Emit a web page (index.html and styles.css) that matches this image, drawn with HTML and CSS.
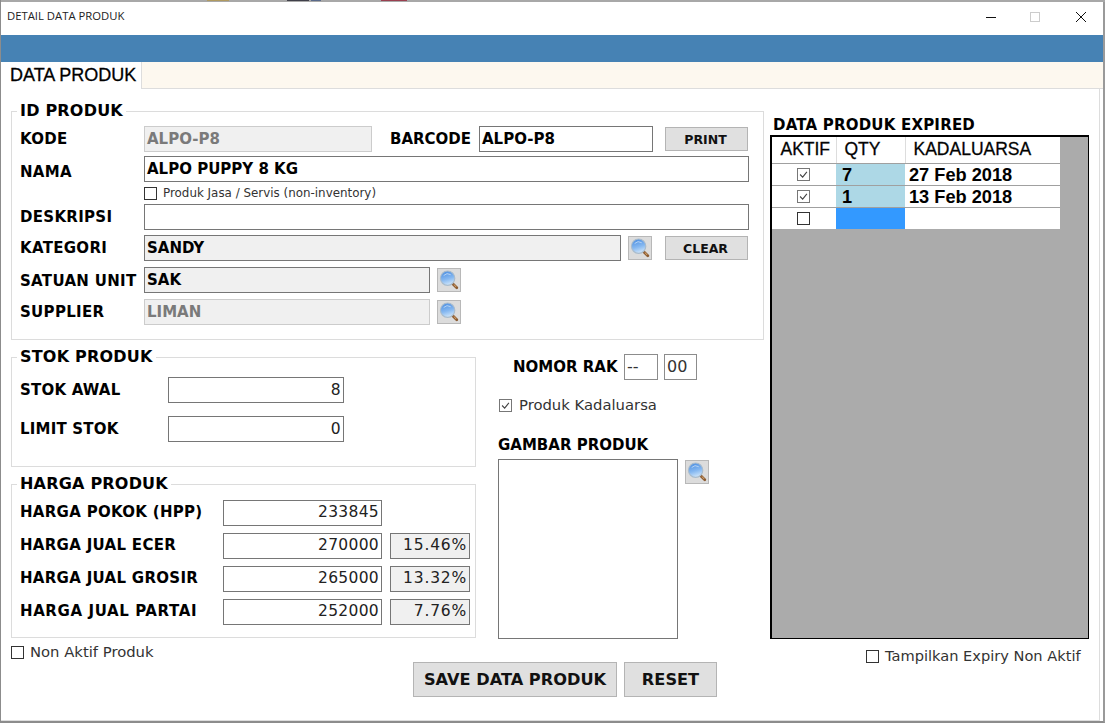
FILE: index.html
```html
<!DOCTYPE html>
<html lang="id">
<head>
<meta charset="utf-8">
<title>DETAIL DATA PRODUK</title>
<link rel="stylesheet" href="styles.css">
</head>
<body>
<svg class="defs" width="0" height="0" aria-hidden="true">
  <defs>
    <linearGradient id="lens" x1="0.3" y1="0" x2="0.6" y2="1">
      <stop offset="0" stop-color="#4d8fe2"/>
      <stop offset="0.55" stop-color="#86b8f0"/>
      <stop offset="1" stop-color="#d3e8fb"/>
    </linearGradient>
    <symbol id="search" viewBox="0 0 24 24">
      <path d="M15.5 15.5l5 5" stroke="#8a5a30" stroke-width="3" stroke-linecap="round"/>
      <path d="M17.5 17.2l2 2" stroke="#d2a06a" stroke-width="1.1" stroke-linecap="round"/>
      <circle cx="10.5" cy="10" r="7.8" fill="url(#lens)" stroke="#a9bccd" stroke-width="1.3"/>
      <path d="M6.5 6.8a5.5 5.5 0 0 1 7-.8" fill="none" stroke="#cfe3f8" stroke-width="1" stroke-linecap="round" opacity=".8"/>
    </symbol>
    <symbol id="tick" viewBox="0 0 13 13">
      <path d="M2.5 6.5l3 3.2 5-6.4" fill="none" stroke="#444" stroke-width="1.3"/>
    </symbol>
  </defs>
</svg>
<div class="window">
  <div class="desk-strip">
    <span class="bit bit-a"></span><span class="bit bit-b"></span><span class="bit bit-c"></span><span class="bit bit-d"></span>
  </div>
  <header class="titlebar">
    <span class="title">DETAIL DATA PRODUK</span>
    <div class="winctl">
      <svg width="12" height="12" viewBox="0 0 12 12"><path d="M1 6.5h10" stroke="#111" stroke-width="1"/></svg>
      <svg class="win-max" width="12" height="12" viewBox="0 0 12 12"><rect x="1.5" y="1.5" width="9" height="9" fill="none" stroke="#ccc"/></svg>
      <svg width="12" height="12" viewBox="0 0 12 12"><path d="M1 1l10 10M11 1L1 11" stroke="#111" stroke-width="1"/></svg>
    </div>
  </header>
  <div class="bluebar"></div>
  <nav class="tabs"><span class="tab">DATA PRODUK</span></nav>

  <main class="panel">
    <div class="col-main">
      <section class="group group-id">
        <h2 class="legend">ID PRODUK</h2>
        <div class="row">
          <label class="lbl lbl-id">KODE</label>
          <div class="field w-kode off">ALPO-P8</div>
          <label class="lbl lbl-barcode">BARCODE</label>
          <div class="field w-barcode">ALPO-P8</div>
          <button class="btn btn-small">PRINT</button>
        </div>
        <div class="row mt4">
          <label class="lbl lbl-id low5">NAMA</label>
          <div class="field w-full">ALPO PUPPY 8 KG</div>
        </div>
        <div class="row-check">
          <span class="box"></span><span class="check-small">Produk Jasa / Servis (non-inventory)</span>
        </div>
        <div class="row">
          <label class="lbl lbl-id">DESKRIPSI</label>
          <div class="field w-full"></div>
        </div>
        <div class="row mt5">
          <label class="lbl lbl-id">KATEGORI</label>
          <div class="field w-kat ro">SANDY</div>
          <button class="icon-btn ml7"><svg class="ico"><use href="#search"/></svg></button>
          <button class="btn btn-small ml13">CLEAR</button>
        </div>
        <div class="row mt6">
          <label class="lbl lbl-id low2">SATUAN UNIT</label>
          <div class="field w-unit ro">SAK</div>
          <button class="icon-btn ml7"><svg class="ico"><use href="#search"/></svg></button>
        </div>
        <div class="row mt6">
          <label class="lbl lbl-id">SUPPLIER</label>
          <div class="field w-unit off">LIMAN</div>
          <button class="icon-btn ml7"><svg class="ico"><use href="#search"/></svg></button>
        </div>
      </section>

      <div class="lower">
        <div class="lower-left">
          <section class="group group-stok">
            <h2 class="legend">STOK PRODUK</h2>
            <div class="row">
              <label class="lbl lbl-stok">STOK AWAL</label>
              <div class="field num w-stok">8</div>
            </div>
            <div class="row mt13">
              <label class="lbl lbl-stok">LIMIT STOK</label>
              <div class="field num w-stok">0</div>
            </div>
          </section>
          <section class="group group-harga">
            <h2 class="legend">HARGA PRODUK</h2>
            <div class="row">
              <label class="lbl lbl-harga">HARGA POKOK (HPP)</label>
              <div class="field num w-harga">233845</div>
            </div>
            <div class="row mt7">
              <label class="lbl lbl-harga">HARGA JUAL ECER</label>
              <div class="field num w-harga">270000</div>
              <div class="field num pct ro w-pct">15.46%</div>
            </div>
            <div class="row mt7">
              <label class="lbl lbl-harga">HARGA JUAL GROSIR</label>
              <div class="field num w-harga">265000</div>
              <div class="field num pct ro w-pct">13.32%</div>
            </div>
            <div class="row mt7">
              <label class="lbl lbl-harga ls-wide">HARGA JUAL PARTAI</label>
              <div class="field num w-harga">252000</div>
              <div class="field num pct ro w-pct">7.76%</div>
            </div>
          </section>
          <div class="check-line nonaktif"><span class="box"></span><span class="check-text">Non Aktif Produk</span></div>
        </div>

        <div class="lower-mid">
          <div class="rak">
            <label class="lbl lbl-rak">NOMOR RAK</label>
            <div class="field rak-a">--</div>
            <div class="field rak-b">00</div>
          </div>
          <div class="check-line kadaluarsa"><span class="box on"><svg class="tick"><use href="#tick"/></svg></span><span class="check-text">Produk Kadaluarsa</span></div>
          <h3 class="lbl gambar-title">GAMBAR PRODUK</h3>
          <div class="gambar-row">
            <div class="gambar"></div>
            <button class="icon-btn ml7 mt1"><svg class="ico"><use href="#search"/></svg></button>
          </div>
        </div>
      </div>
      <div class="actions">
        <button class="btn btn-big btn-save">SAVE DATA PRODUK</button>
        <button class="btn btn-big btn-reset">RESET</button>
      </div>
    </div>

    <aside class="col-side">
      <h3 class="lbl side-title">DATA PRODUK EXPIRED</h3>
      <div class="gridview">
        <table class="grid">
          <colgroup><col class="c1"><col class="c2"><col class="c3"></colgroup>
          <thead><tr><th class="th-aktif">AKTIF</th><th class="th-qty">QTY</th><th class="th-kad">KADALUARSA</th></tr></thead>
          <tbody>
            <tr><td class="cc"><span class="box box-cell on"><svg class="tick"><use href="#tick"/></svg></span></td><td class="qty">7</td><td class="dt">27 Feb 2018</td></tr>
            <tr><td class="cc"><span class="box box-cell on"><svg class="tick"><use href="#tick"/></svg></span></td><td class="qty">1</td><td class="dt">13 Feb 2018</td></tr>
            <tr><td class="cc"><span class="box box-cell"></span></td><td class="qty-new"></td><td></td></tr>
          </tbody>
        </table>
      </div>
      <div class="check-line expiry"><span class="box"></span><span class="check-text">Tampilkan Expiry Non Aktif</span></div>
    </aside>
  </main>
</div>
</body>
</html>
```

FILE: styles.css
```css
* { box-sizing: border-box; }
html, body { margin: 0; padding: 0; }
body { width: 1105px; height: 723px; overflow: hidden; background: #fff; font-family: "DejaVu Sans", sans-serif; color: #000; }
.defs { position: absolute; }
.window { width: 1105px; height: 723px; display: flex; flex-direction: column; border-left: 1px solid #8c8c8c; border-right: 2px solid #9a9a9a; border-bottom: 2px solid #8c8c8c; }
.desk-strip { height: 2px; background: #a8a8a8; display: flex; flex: none; margin-right: -2px; }
.bit { height: 1px; }
.bit-a { width: 22px; margin-left: 206px; background: #b09a60; }
.bit-b { width: 22px; margin-left: 58px; background: #40404a; }
.bit-c { width: 10px; margin-left: 2px; background: #5a6a8a; }
.bit-d { width: 26px; margin-left: 60px; background: #9a4050; }

.titlebar { height: 33px; flex: none; display: flex; align-items: center; justify-content: space-between; background: #fff; padding-left: 6px; }
.title { font: 11.3px "Open Sans", sans-serif; color: #222; position: relative; top: -3px; }
.winctl { display: flex; gap: 33px; padding-right: 16px; position: relative; top: -2px; }
.win-max { position: relative; left: -1px; }
.bluebar { height: 27px; flex: none; background: #4682b4; }
.tabs { height: 27px; flex: none; background: #fdf8ef; border-bottom: 1px solid #ddd; }
.tab { display: block; width: 141px; height: 28px; background: #fff; border-right: 1px solid #ddd; font: 18px/26px "Liberation Sans", sans-serif; -webkit-text-stroke: .3px #000; padding-left: 9px; }

.panel { flex: 1; display: flex; background: #fff; padding: 22px 0 0 10px; margin-right: 3px; border-right: 1px solid #ddd; border-bottom: 1px solid #ddd; border-left: 0; }
.col-main { width: 753px; flex: none; }
.col-side { width: 330px; flex: none; padding-left: 6px; }

.group { border: 1px solid #dcdcdc; padding: 0 0 0 8px; }
.group-id { height: 229px; }
.group-stok { height: 110px; width: 465px; margin-top: 17px; }
.group-harga { height: 154px; width: 465px; margin-top: 17px; }
.legend { display: table; margin: -10px 0 0 -3px; padding: 0 3px; height: 18px; background: #fff; font: bold 16px/18px "DejaVu Sans", sans-serif; letter-spacing: .2px; }
.group-id .legend { margin-bottom: 6px; }
.group-stok .legend { margin-bottom: 11px; }
.group-harga .legend { margin-bottom: 7px; }

.row { display: flex; align-items: center; height: 26px; }
.mt4 { margin-top: 4px; } .mt5 { margin-top: 5px; } .mt6 { margin-top: 6px; } .mt7 { margin-top: 7px; } .mt13 { margin-top: 13px; }
.mt1 { margin-top: 1px; }
.ml7 { margin-left: 7px; }
.row-check { display: flex; align-items: center; height: 22px; padding-left: 124px; }

.lbl { font: bold 15px/18px "DejaVu Sans", sans-serif; display: block; margin: 0; }
.lbl-id { width: 124px; flex: none; white-space: nowrap; letter-spacing: .3px; }
.low5 { padding-top: 5px; }
.low2 { padding-top: 2px; }
.lbl-barcode { margin-left: 18px; width: 89px; flex: none; }
.lbl-stok { width: 148px; flex: none; letter-spacing: .2px; }
.lbl-harga { width: 203px; flex: none; letter-spacing: .3px; white-space: nowrap; padding-bottom: 2px; }
.ls-wide { letter-spacing: .6px; }

.field { height: 26px; border: 1px solid #767676; background: #fff; font: bold 15px/24px "DejaVu Sans", sans-serif; padding: 0 2px; white-space: nowrap; flex: none; }
.field.ro { background: #f0f0f0; }
.field.off { background: #f0f0f0; color: #7a7a7a; border-color: #ccc; }
.field.num { font: 15.5px/24px "DejaVu Sans", sans-serif; text-align: right; color: #222; letter-spacing: .3px; }
.group-harga .field.num { line-height: 22px; }
.field.pct { letter-spacing: .8px; }
.w-kode { width: 228px; }
.w-barcode { width: 174px; }
.w-full { width: 605px; }
.w-kat { width: 477px; }
.w-unit { width: 286px; }
.w-stok { width: 176px; }
.w-harga { width: 159px; }
.w-pct { width: 80px; margin-left: 8px; }

.btn { background: #e0e0e0; border: 1px solid #b4b4b4; font-family: "DejaVu Sans", sans-serif; font-weight: bold; color: #111; padding: 0; flex: none; }
.btn-small { width: 83px; height: 24px; font-size: 12.5px; margin-left: 12px; padding-right: 2px; }
.btn-small.ml13 { margin-left: 13px; }
.icon-btn { width: 24px; height: 24px; padding: 0; background: #dcdcdc; border: 1px solid #b8b8b8; display: flex; align-items: center; justify-content: center; flex: none; }
.ico { width: 22px; height: 22px; display: block; }

.box { width: 13px; height: 13px; border: 1px solid #333; background: #fff; display: block; flex: none; }
.box.on { border-color: #777; }
.tick { width: 11px; height: 11px; display: block; }
.check-small { font: 11.9px "DejaVu Sans", sans-serif; margin-left: 6px; color: #333; }
.check-line { display: flex; align-items: center; }
.check-text { font: 14.8px/18px "DejaVu Sans", sans-serif; margin-left: 6px; color: #333; white-space: nowrap; }
.kadaluarsa .check-text { margin-left: 7px; }

.lower { display: flex; }
.lower-left { width: 487px; flex: none; }
.nonaktif { margin-top: 5px; height: 18px; }
.lower-mid { flex: 1; padding-top: 10px; }
.rak { display: flex; align-items: center; height: 26px; margin-top: 4px; padding-left: 15px; }
.lbl-rak { width: 111px; flex: none; }
.rak-a, .rak-b { font: 16px/24px "DejaVu Sans", sans-serif; color: #333; border-color: #8c8c8c; }
.rak-a { width: 34px; }
.rak-b { width: 33px; margin-left: 6px; }
.kadaluarsa { margin-top: 16px; padding-left: 1px; }
.gambar-title { margin-top: 22px; }
.gambar-row { display: flex; align-items: flex-start; margin-top: 5px; }
.gambar { width: 180px; height: 180px; border: 1px solid #767676; background: #fff; flex: none; }

.actions { display: flex; gap: 7px; padding-left: 402px; margin-top: 1px; }
.btn-big { height: 35px; font-size: 16.2px; }
.btn-save { width: 204px; }
.btn-reset { width: 93px; }

.side-title { margin: 5px 0 0 3px; white-space: nowrap; letter-spacing: .2px; }
.gridview { width: 319px; height: 504px; margin-top: 1px; background: #ababab; border: 1px solid #000; border-width: 2px 1px 1px 2px; }
.grid { border-collapse: collapse; table-layout: fixed; width: 288px; background: #fff; font-family: "Liberation Sans", sans-serif; }
.c1 { width: 64px; } .c2 { width: 69px; } .c3 { width: 155px; }
.grid th { height: 26px; padding: 0; font: 17.5px "Liberation Sans", sans-serif; -webkit-text-stroke: .3px #111; text-align: center; border-bottom: 1px solid #a0a0a0; border-right: 1px solid #ddd; }
.grid th:last-child { border-right: 0; }
.th-aktif { padding-left: 3px !important; }
.th-qty { text-align: left !important; padding-left: 8px !important; }
.th-kad { text-align: left !important; padding-left: 8px !important; }
.grid td { height: 22px; padding: 1px 0 0; border-bottom: 1px solid #a0a0a0; font: bold 18.2px/20px "Liberation Sans", sans-serif; }
.grid tr:last-child td { border-bottom: 0; }
.grid td.cc { padding: 0 2px 0 0; }
.box-cell { margin: 0 auto; }
.grid td.qty { background: #add8e6; padding-left: 6px; }
.qty-new { background: #3399ff; }
.grid td.dt { padding-left: 4px; }
.expiry { margin-top: 8px; padding-left: 96px; height: 18px; }
.expiry .check-text { font-size: 14.6px; }
```
